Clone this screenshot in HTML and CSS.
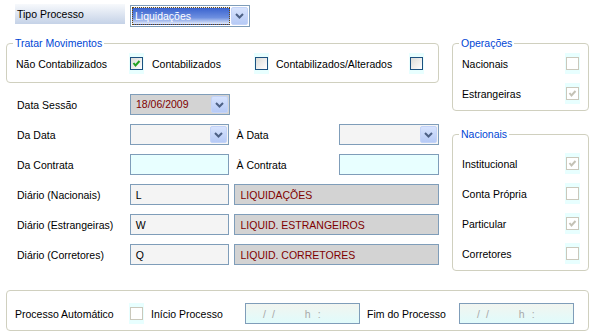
FILE: index.html
```html
<!DOCTYPE html>
<html lang="pt">
<head>
    <meta charset="UTF-8">
    <title>Processo de Liquidações</title>
    <link rel="stylesheet" href="styles.css">
</head>
<body>
    <div class="form">
        <div class="top-row">
            <div class="title-label">Tipo Processo</div>
            <div class="select">
                <span class="select-value">Liquidações</span>
                <span class="drop-btn"><svg width="9" height="6" viewBox="0 0 9 6"><path d="M1 1 L4.5 4.5 L8 1" fill="none" stroke="#4d6185" stroke-width="2"/></svg></span>
            </div>
        </div>

        <div class="main">
            <div class="left-col">
                <div class="group group-tratar">
                    <span class="legend">Tratar Movimentos</span>
                    <div class="check-line">
                        <span class="w-nao">Não Contabilizados</span>
                        <span class="chk"><span class="box on"><svg width="11" height="11" viewBox="0 0 11 11"><path d="M2.5 5 L4.5 7.5 L8.5 3" fill="none" stroke="#21a121" stroke-width="2"/></svg></span></span>
                        <span class="w-cont">Contabilizados</span>
                        <span class="chk"><span class="box"></span></span>
                        <span class="w-alt">Contabilizados/Alterados</span>
                        <span class="chk"><span class="box"></span></span>
                    </div>
                </div>

                <div class="fields">
                    <div class="field-row">
                        <span class="field-label">Data Sessão</span>
                        <div class="combo readonly"><span class="val red">18/06/2009</span><span class="drop-btn small"><svg width="9" height="6" viewBox="0 0 9 6"><path d="M1 1 L4.5 4.5 L8 1" fill="none" stroke="#4d6185" stroke-width="2"/></svg></span></div>
                    </div>
                    <div class="field-row">
                        <span class="field-label">Da Data</span>
                        <div class="combo light"><span class="val"></span><span class="drop-btn small"><svg width="9" height="6" viewBox="0 0 9 6"><path d="M1 1 L4.5 4.5 L8 1" fill="none" stroke="#4d6185" stroke-width="2"/></svg></span></div>
                        <span class="mid-label">À Data</span>
                        <div class="combo light"><span class="val"></span><span class="drop-btn small"><svg width="9" height="6" viewBox="0 0 9 6"><path d="M1 1 L4.5 4.5 L8 1" fill="none" stroke="#4d6185" stroke-width="2"/></svg></span></div>
                    </div>
                    <div class="field-row">
                        <span class="field-label">Da Contrata</span>
                        <div class="text-box cyan"></div>
                        <span class="mid-label">À Contrata</span>
                        <div class="text-box cyan"></div>
                    </div>
                    <div class="field-row">
                        <span class="field-label">Diário (Nacionais)</span>
                        <div class="text-box light">L</div>
                        <div class="text-box readonly wide red">LIQUIDAÇÕES</div>
                    </div>
                    <div class="field-row">
                        <span class="field-label">Diário (Estrangeiras)</span>
                        <div class="text-box light">W</div>
                        <div class="text-box readonly wide red">LIQUID. ESTRANGEIROS</div>
                    </div>
                    <div class="field-row">
                        <span class="field-label">Diário (Corretores)</span>
                        <div class="text-box light">Q</div>
                        <div class="text-box readonly wide red">LIQUID. CORRETORES</div>
                    </div>
                </div>
            </div>

            <div class="right-col">
                <div class="group group-oper">
                    <span class="legend">Operações</span>
                    <div class="opt-line"><span>Nacionais</span><span class="chk"><span class="box off"></span></span></div>
                    <div class="opt-line"><span>Estrangeiras</span><span class="chk"><span class="box off"><svg width="11" height="11" viewBox="0 0 11 11"><path d="M2.5 5 L4.5 7.5 L8.5 3" fill="none" stroke="#c4c2b5" stroke-width="2"/></svg></span></span></div>
                </div>
                <div class="group group-nac">
                    <span class="legend">Nacionais</span>
                    <div class="opt-line"><span>Institucional</span><span class="chk"><span class="box off"><svg width="11" height="11" viewBox="0 0 11 11"><path d="M2.5 5 L4.5 7.5 L8.5 3" fill="none" stroke="#c4c2b5" stroke-width="2"/></svg></span></span></div>
                    <div class="opt-line"><span>Conta Própria</span><span class="chk"><span class="box off"></span></span></div>
                    <div class="opt-line"><span>Particular</span><span class="chk"><span class="box off"><svg width="11" height="11" viewBox="0 0 11 11"><path d="M2.5 5 L4.5 7.5 L8.5 3" fill="none" stroke="#c4c2b5" stroke-width="2"/></svg></span></span></div>
                    <div class="opt-line"><span>Corretores</span><span class="chk"><span class="box off"></span></span></div>
                </div>
            </div>
        </div>

        <div class="group group-bottom">
            <div class="bottom-line">
                <span class="w-auto">Processo Automático</span>
                <span class="chk"><span class="box off"></span></span>
                <span class="w-inicio">Início Processo</span>
                <div class="mask-box"><span>/</span><span>/</span><span class="h">h</span><span>:</span></div>
                <span class="w-fim">Fim do Processo</span>
                <div class="mask-box"><span>/</span><span>/</span><span class="h">h</span><span>:</span></div>
            </div>
        </div>
    </div>
</body>
</html>
```

FILE: styles.css
```css
body {
    margin: 0;
    background: #fff;
    font-family: 'Liberation Sans', Arial, sans-serif;
    font-size: 10.5px;
    color: #000;
}
.form {
    padding: 4px 0 0 6px;
}
.top-row {
    display: flex;
    align-items: flex-start;
}
.title-label {
    width: 108px;
    height: 20px;
    line-height: 20px;
    margin-left: 9px;
    padding-left: 2px;
    background: linear-gradient(#f7f9fc, #c5d2e7);
}
.select {
    display: flex;
    width: 116px;
    height: 18px;
    margin: 1px 0 0 5px;
    padding: 1px;
    border: 1px solid #7f9db9;
    background: #fff;
}
.select-value {
    flex: 1;
    line-height: 16px;
    padding-left: 2px;
    color: #fff;
    border: 1px dotted #6a4a10;
    background: linear-gradient(#3a63cf, #6d8fe0 60%, #e3eaf9);
}
.drop-btn {
    display: flex;
    align-items: center;
    justify-content: center;
    width: 15px;
    margin-left: 1px;
    border: 1px solid #c3d3f8;
    border-radius: 2px;
    background: linear-gradient(#d7e3fd, #b6caf6);
}
.drop-btn.small {
    width: 15px;
}
.main {
    display: flex;
    align-items: flex-start;
    margin-top: 16px;
}
.left-col {
    width: 433px;
}
.right-col {
    width: 137px;
    margin-left: 13px;
}
.group {
    position: relative;
    border: 1px solid #d0d0bf;
    border-radius: 4px;
    box-sizing: border-box;
}
.legend {
    position: absolute;
    top: -7px;
    left: 6px;
    padding: 0 2px;
    line-height: 13px;
    color: #0046d5;
    background: #fff;
}
.group-tratar {
    height: 40px;
    padding: 9px 0 0 9px;
}
.check-line, .bottom-line {
    display: flex;
    align-items: center;
    height: 21px;
}
.w-nao { width: 113px; }
.w-cont { width: 102px; padding-left: 8px; }
.w-alt { width: 133px; padding-left: 7px; }
.w-auto { width: 114px; }
.w-inicio { width: 94px; padding-left: 7px; }
.w-fim { width: 92px; padding-left: 7px; }
.chk {
    display: flex;
    justify-content: center;
    align-items: center;
    width: 15px;
    height: 21px;
    background: #e8ffff;
}
.box {
    width: 11px;
    height: 11px;
    border: 1px solid #1c5180;
    background: linear-gradient(135deg, #dcdcd7, #fff);
}
.box.off {
    border-color: #cac8bb;
    background: #fff;
}
.box svg {
    display: block;
}
.fields {
    padding: 11px 0 0 11px;
}
.field-row {
    display: flex;
    align-items: center;
    height: 21px;
    margin-bottom: 9px;
}
.field-label {
    width: 113px;
}
.mid-label {
    width: 103px;
    padding-left: 7px;
}
.combo, .text-box {
    display: flex;
    box-sizing: border-box;
    width: 100px;
    height: 21px;
    border: 1px solid #7f9db9;
}
.combo {
    padding: 1px;
}
.combo .val {
    flex: 1;
    line-height: 17px;
    padding-left: 4px;
}
.text-box {
    align-items: center;
    padding-left: 5px;
}
.text-box.wide {
    width: 205px;
    margin-left: 5px;
}
.readonly { background: #d3d3d3; }
.light { background: #f4f4f4; }
.cyan { background: #e8ffff; }
.red { color: #800000; }
.group-oper {
    height: 68px;
    padding-top: 9px;
}
.group-nac {
    height: 137px;
    margin-top: 23px;
    padding-top: 18px;
}
.opt-line {
    display: flex;
    align-items: center;
    justify-content: space-between;
    height: 21px;
    padding: 0 8px 0 9px;
    margin-bottom: 9px;
}
.group-bottom {
    width: 583px;
    height: 41px;
    margin-top: 16px;
    padding: 12px 0 0 8px;
}
.mask-box {
    display: flex;
    align-items: center;
    box-sizing: border-box;
    width: 115px;
    height: 21px;
    padding-left: 17px;
    color: #a8a8a8;
    border: 1px solid #7f9db9;
    background: linear-gradient(#f2f5f0, #e0fbfb);
}
.mask-box span {
    margin-right: 6px;
}
.mask-box .h {
    margin-left: 24px;
    margin-right: 7px;
}
```
